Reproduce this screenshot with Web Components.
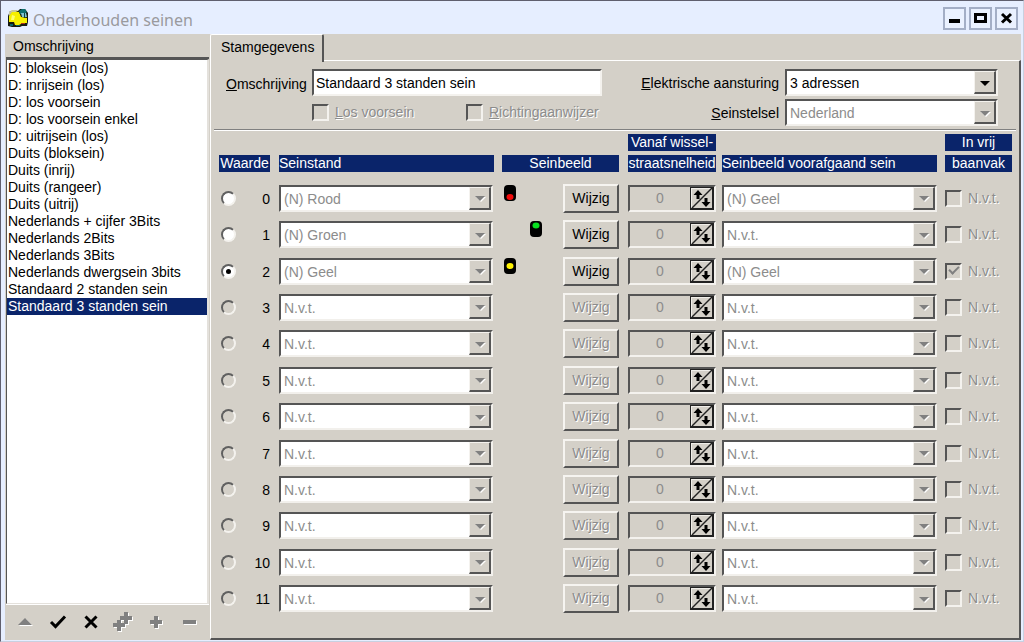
<!DOCTYPE html>
<html lang="nl">
<head>
<meta charset="utf-8">
<meta name="viewport" content="width=device-width, initial-scale=1">
<title>Onderhouden seinen</title>
<style>
  body {
    margin: 0;
    font: 14px/17px "Liberation Sans", Arial, sans-serif;
    color: #000;
    --face: #d4d0c8;
    --dark: #555555;
    --shade: #808080;
    --light: #ffffff;
    --navy: #0a246a;
    --frame: #e6eeff;
  }
</style>
</head>
<body>
<signal-window></signal-window>

<script>
const define = (name, html, setup) => {
  const template = document.createElement('template');
  template.innerHTML = html;
  customElements.define(name, class extends HTMLElement {
    connectedCallback() {
      if (this.shadowRoot) return;
      this.attachShadow({ mode: 'open' }).append(template.content.cloneNode(true));
      if (setup) setup(this, this.shadowRoot);
    }
  });
};

/* Title bar with the train icon and the three window buttons */
define('title-bar', `
  <style>
    :host { display: flex; align-items: center; height: 32px; padding: 0 3px 0 2px; background: var(--frame); }
    h1 { flex: 1; margin: 0 0 0 4px; font: 16px/22px "Noto Sans", sans-serif; color: #9a9a9e; padding-top: 4px; }
    .logo { width: 22px; height: 20px; }
    .buttons { display: flex; gap: 3px; }
    button { width: 23px; height: 23px; padding: 0; border: 2px solid #a3aec6; background: #eaf1ff; display: grid; place-items: center; }
    button svg { width: 17px; height: 17px; }
  </style>
  <svg class="logo" viewBox="0 0 22 20" aria-hidden="true">
    <path d="M1 18V8l2-5h8l2-2h5l3 4v9l-1 4h-5l-2 1H5z" fill="#161a10"/>
    <path d="M2 14V8l3-5 7 1 2 5 6 1v5h-4l-4 2H8l-1-3H4z" fill="#f6f000"/>
    <path d="M2 4l3-2h6l-2 2H5L2 8z" fill="#c9c9a0"/>
    <path d="M12 3l3-2h3l2 3-3 2h-4z" fill="#0d7070"/>
    <path d="M14 5h5l1 4h-5z" fill="#7fc4d0"/>
    <path d="M17 5h1v5h-1z" fill="#0c4448"/>
    <path d="M5 7l3 1-1 4H4z" fill="#ffff70"/>
    <path d="M3 16h3v2H3zM9 17h4v1H9z" fill="#0d6464"/>
    <path d="M14 15h4v1h-4z" fill="#b0301a"/>
  </svg>
  <h1>Onderhouden seinen</h1>
  <div class="buttons">
    <button aria-label="Minimaliseren"><svg viewBox="0 0 17 17"><path d="M3 9h11v4H3z"/></svg></button>
    <button aria-label="Maximaliseren"><svg viewBox="0 0 17 17"><path d="M2 3h13v10H2zM5 6v4h7V6z" fill-rule="evenodd"/></svg></button>
    <button aria-label="Sluiten"><svg viewBox="0 0 17 17"><path d="M4 4l9 8.500M13 4l-9 8.500" stroke="#000" stroke-width="3"/></svg></button>
  </div>`);

/* Left column: list of signals and the record toolbar */
define('signal-list', `
  <style>
    :host { display: flex; flex-direction: column; width: 203px; padding-left: 1px; }
    h2 { margin: 3px 0 0; padding: 1px 7px 2px; font: inherit; border-bottom: 2px solid var(--dark); }
    ul { flex: 1; margin: 0; padding: 0; list-style: none; background: #fff; border: 1px solid var(--dark); border-right: 2px solid #e4e1dc; border-bottom-color: #e4e1dc; }
    li { padding-left: 1px; white-space: nowrap; cursor: default; }
    li[aria-selected="true"] { background: var(--navy); color: #fff; }
    .tools { display: flex; height: 35px; padding-left: 2px; border-top: 1px solid #fff; }
    button { width: 33px; padding: 0 0 2px; border: 0; background: none; display: grid; place-items: center; }
    svg { width: 22px; height: 22px; }
    button:disabled svg { color: var(--shade); filter: drop-shadow(1px 1px 0 #fff); }
  </style>
  <h2 id="caption">Omschrijving</h2>
  <ul role="listbox" aria-labelledby="caption"></ul>
  <div class="tools" role="toolbar" aria-label="Bewerken">
    <button disabled aria-label="Bewerken"><svg viewBox="0 0 22 22"><path d="M11 7l7 7H4z" fill="currentColor"/></svg></button>
    <button aria-label="Opslaan"><svg viewBox="0 0 22 22"><path d="M4 11l4.500 4.500L18 5.500" fill="none" stroke="#000" stroke-width="3"/></svg></button>
    <button aria-label="Annuleren"><svg viewBox="0 0 22 22"><path d="M5.500 5.500l11 11M16.500 5.500l-11 11" stroke="#000" stroke-width="3"/></svg></button>
    <button disabled aria-label="Kopieren"><svg viewBox="0 0 22 22"><path d="M4 9h4v3h4v4H8v4H4v-4H0v-4h4zM11 1h4v4h4v4h-4v4h-4V9H7V5h4z" fill="currentColor"/></svg></button>
    <button disabled aria-label="Toevoegen"><svg viewBox="0 0 22 22"><path d="M8 5h4v4h4v4h-4v4H8v-4H4V9h4z" fill="currentColor"/></svg></button>
    <button disabled aria-label="Verwijderen"><svg viewBox="0 0 22 22"><path d="M4 9h13v4H4z" fill="currentColor"/></svg></button>
  </div>`, (host, root) => {
  const names = ['D: bloksein (los)', 'D: inrijsein (los)', 'D: los voorsein', 'D: los voorsein enkel',
    'D: uitrijsein (los)', 'Duits (bloksein)', 'Duits (inrij)', 'Duits (rangeer)', 'Duits (uitrij)',
    'Nederlands + cijfer 3Bits', 'Nederlands 2Bits', 'Nederlands 3Bits', 'Nederlands dwergsein 3bits',
    'Standaard 2 standen sein', 'Standaard 3 standen sein'];
  const list = root.querySelector('ul');
  names.forEach((name, i) => {
    const li = document.createElement('li');
    li.setAttribute('role', 'option');
    li.setAttribute('aria-selected', i === names.length - 1);
    li.textContent = name;
    list.append(li);
  });
  list.addEventListener('click', e => {
    if (e.target.tagName !== 'LI') return;
    for (const li of list.children) li.setAttribute('aria-selected', li === e.target);
  });
});

/* One tab page; its contents come in through the slot */
define('tab-page', `
  <style>
    :host { display: flex; flex-direction: column; flex: 1; min-width: 0; }
    [role=tablist] { display: flex; height: 26px; }
    button { position: relative; z-index: 1; height: 28px; margin: 0; padding: 0 8px 2px 10px; font: inherit; color: inherit; background: var(--face);
      border: solid; border-width: 1px 2px 0 1px; border-color: #fff var(--dark) #fff #fff; border-radius: 2px 2px 0 0; }
    [role=tabpanel] { flex: 1; display: flex; flex-direction: column; border: solid; border-width: 1px 2px 2px 1px; border-color: #fff var(--dark) var(--dark) #fff; }
  </style>
  <div role="tablist"><button role="tab" id="tab" aria-selected="true"></button></div>
  <div role="tabpanel" aria-labelledby="tab"><slot></slot></div>`,
  (host, root) => { root.querySelector('button').textContent = host.getAttribute('label'); });

/* Sunken drop-down, optionally with its caption on the left */
define('drop-down', `
  <style>
    :host { display: flex; align-items: center; justify-content: flex-end; gap: 6px; }
    label:empty { display: none; }
    label { white-space: nowrap; padding-top: 2px; }
    .box { flex: 1; min-width: 0; display: grid; grid-template-columns: 1fr 22px; height: 27px; box-sizing: border-box; background: #fff;
      border: 2px solid; border-color: var(--dark) #f2f0ec #f2f0ec var(--dark); }
    :host([caption]) .box { flex: none; width: 213px; }
    select { grid-area: 1 / 1 / 2 / 3; appearance: none; min-width: 0; margin: 0; padding: 2px 22px 0 3px; border: 0; background: none; font: inherit; color: #000; outline: 0; }
    select:disabled { color: #8c8c8c; opacity: 1; }
    .arrow { grid-area: 1 / 2; display: grid; place-items: center; pointer-events: none; background: var(--face);
      border: solid; border-width: 1px 2px 2px 1px; border-color: #f4f2ee var(--dark) var(--dark) #f4f2ee; }
    .arrow svg { width: 10px; height: 5px; margin-top: 2px; fill: #000; }
    select:disabled + .arrow svg { fill: var(--shade); filter: drop-shadow(1px 1px 0 #fff); }
  </style>
  <label for="s"></label>
  <div class="box"><select id="s"><option></option></select>
    <span class="arrow"><svg viewBox="0 0 10 5"><path d="M0 0h10L5 5z"/></svg></span></div>`,
  (host, root) => {
    const select = root.querySelector('select');
    const caption = host.getAttribute('caption');
    if (caption) root.querySelector('label').innerHTML = '<u>' + caption[0] + '</u>' + caption.slice(1);
    else select.setAttribute('aria-label', host.getAttribute('name'));
    root.querySelector('option').textContent = host.getAttribute('value');
    select.disabled = host.hasAttribute('disabled');
  });

/* Sunken tick box with a label */
define('check-box', `
  <style>
    :host { display: block; }
    label { display: flex; align-items: center; gap: 6px; white-space: nowrap; color: #8c8c8c; text-shadow: 1px 1px 0 #fff; }
    input { appearance: none; flex: none; width: 17px; height: 17px; margin: 0; box-sizing: border-box; background: var(--face);
      border: 2px solid; border-color: var(--dark) #f4f2ee #f4f2ee var(--dark); display: grid; place-items: center; }
    input:checked::before { content: ""; width: 8px; height: 4px; border: solid var(--shade); border-width: 0 0 2px 2px; transform: translateY(-2px) rotate(-45deg); }
  </style>
  <label><input type="checkbox"><span></span></label>`,
  (host, root) => {
    const input = root.querySelector('input');
    const text = host.getAttribute('label');
    root.querySelector('span').innerHTML = host.hasAttribute('key') ? '<u>' + text[0] + '</u>' + text.slice(1) : text;
    input.checked = host.hasAttribute('checked');
    input.disabled = true;
    if (host.hasAttribute('name')) input.setAttribute('aria-label', text + ' ' + host.getAttribute('name'));
  });

/* Number box with the split up/down button */
define('spin-box', `
  <style>
    :host { display: flex; height: 27px; box-sizing: border-box; background: var(--face);
      border: 2px solid; border-color: var(--dark) #f4f2ee #f4f2ee var(--dark); }
    input { flex: 1; min-width: 0; padding: 0; border: 0; background: none; text-align: center; font: inherit; color: #8c8c8c; outline: 0; }
    button { width: 24px; height: 23px; padding: 0; border: 0; background: none; display: block; }
    svg { display: block; width: 24px; height: 23px; }
  </style>
  <input type="text" inputmode="numeric" value="0" disabled>
  <button aria-label="Hoger of lager"><svg viewBox="0 0 24 23">
    <path d="M0 0h24v23H0z" fill="#222"/>
    <path d="M1 1h21v20H1z" fill="#f0eee9"/>
    <path d="M2 2h20v19H2z" fill="#d4d0c8"/>
    <path d="M2 21L22 1" stroke="#222" stroke-width="1.500"/>
    <path d="M8 3l4.500 5H9.500v4h-3V8h-3zM16 20l-4.500-5h3v-4h3v4h3z"/>
  </svg></button>`,
  (host, root) => root.querySelector('input').setAttribute('aria-label', host.getAttribute('name')));

/* Signal head with one lit lamp */
define('signal-lamp', `
  <style>
    :host { display: block; width: 12px; height: 16px; }
    svg { display: block; width: 12px; height: 16px; }
  </style>
  <svg viewBox="0 0 12 16" role="img"><rect width="12" height="16" rx="4"/><ellipse cx="6" rx="3.500" ry="3"/></svg>`,
  (host, root) => {
    const [fill, y] = { rood: ['#f00a0a', 12], groen: ['#08e020', 4.5], geel: ['#fff200', 8] }[host.getAttribute('color')];
    const lamp = root.querySelector('ellipse');
    lamp.setAttribute('fill', fill);
    lamp.setAttribute('cy', y);
    root.querySelector('svg').setAttribute('aria-label', host.getAttribute('color'));
  });

/* Top part of the page: name, options and drive settings */
define('signal-form', `
  <style>
    :host { display: flex; justify-content: space-between; margin: 0 3px; padding: 8px 18px 3px 12px; border-bottom: 1px solid var(--shade); box-shadow: 0 1px 0 #fff; }
    .left, .right { display: grid; gap: 3px; }
    .name { display: grid; grid-template-columns: auto 290px; column-gap: 5px; align-items: center; }
    .name label { padding-top: 3px; }
    .name input { height: 27px; box-sizing: border-box; padding: 0 2px; border: 2px solid; border-color: var(--dark) #f4f2ee #f4f2ee var(--dark); background: #fff; font: inherit; color: #000; outline: 0; }
    .options { grid-column: 2; display: grid; grid-template-columns: 154px auto; height: 27px; align-items: center; }
  </style>
  <div class="left name">
    <label for="naam"><u>O</u>mschrijving</label>
    <input id="naam" type="text" value="Standaard 3 standen sein">
    <div class="options">
      <check-box label="Los voorsein" key></check-box>
      <check-box label="Richtingaanwijzer" key></check-box>
    </div>
  </div>
  <div class="right">
    <drop-down caption="Elektrische aansturing" value="3 adressen"></drop-down>
    <drop-down caption="Seinstelsel" value="Nederland" disabled></drop-down>
  </div>`);

/* The twelve signal values */
define('signal-table', `
  <style>
    :host { display: flex; flex: 1; margin: 4px 7px 21px 8px; }
    table { flex: 1; width: 100%; table-layout: fixed; border-collapse: collapse; }
    .value { width: 60px; } .image { width: 126px; } .speed { width: 94px; } .free { width: 67px; }
    th { height: 38px; padding: 0 8px 8px 0; vertical-align: bottom; font-weight: normal; white-space: nowrap; }
    td { padding: 0 8px 0 0; vertical-align: middle; }
    th:nth-child(1), th:nth-child(3), td:nth-child(2), td:nth-child(3) { padding-right: 9px; }
    th:nth-child(4), td:nth-child(4) { padding-right: 6px; }
    th:last-child, td:last-child { padding-right: 0; }
    th span { display: block; background: var(--navy); color: #fff; }
    th span + span { margin-top: 4px; }
    th.start { text-align: left; }
    .pick { display: flex; align-items: center; justify-content: space-between; padding: 0 1px 0 2px; }
    .pick label { padding-top: 2px; }
    .pick input { appearance: none; width: 15px; height: 15px; margin: 0; box-sizing: border-box; border-radius: 50%;
      border: 2px solid; border-color: #606060 #f4f2ee #f4f2ee #606060; background: #fff; display: grid; place-items: center; }
    .pick input:disabled { background: none; }
    .pick input:checked::before { content: ""; width: 5px; height: 5px; border-radius: 50%; background: #000; }
    .view { display: flex; justify-content: space-between; align-items: center; }
    .view .lamps { display: flex; align-items: flex-start; height: 27px; padding-left: 2px; }
    .view .lamps.second { padding-left: 28px; }
    .view button { width: 56px; height: 29px; padding: 0; font: inherit; background: var(--face); color: #000;
      border: 2px solid; border-color: #f6f4f0 var(--dark) var(--dark) #f6f4f0; }
    .view button:disabled { color: #8c8c8c; text-shadow: 1px 1px 0 #fff; }
  </style>
  <table>
    <colgroup><col class="value"><col><col class="image"><col class="speed"><col><col class="free"></colgroup>
    <thead><tr>
      <th scope="col"><span>Waarde</span></th>
      <th scope="col" class="start"><span>Seinstand</span></th>
      <th scope="col"><span>Seinbeeld</span></th>
      <th scope="col"><span>Vanaf wissel-</span><span>straatsnelheid</span></th>
      <th scope="col" class="start"><span>Seinbeeld voorafgaand sein</span></th>
      <th scope="col"><span>In vrij</span><span>baanvak</span></th>
    </tr></thead>
    <tbody></tbody>
  </table>`, (host, root) => {
  const rows = [
    { state: '(N) Rood', lamp: 'rood', before: '(N) Geel' },
    { state: '(N) Groen', lamp: 'groen', second: true, before: 'N.v.t.' },
    { state: '(N) Geel', lamp: 'geel', before: '(N) Geel', picked: true, free: true }
  ];
  let html = '';
  for (let i = 0; i < 12; i++) {
    const r = rows[i] || { state: 'N.v.t.', before: 'N.v.t.' };
    const off = rows[i] ? '' : 'disabled';
    html += `<tr>
      <td><div class="pick"><input type="radio" name="waarde" id="w${i}" ${off} ${r.picked ? 'checked' : ''}><label for="w${i}">${i}</label></div></td>
      <td><drop-down name="Seinstand ${i}" value="${r.state}" disabled></drop-down></td>
      <td><div class="view"><div class="lamps ${r.second ? 'second' : ''}">${r.lamp ? `<signal-lamp color="${r.lamp}"></signal-lamp>` : ''}</div><button ${off}>Wijzig</button></div></td>
      <td><spin-box name="Snelheid ${i}"></spin-box></td>
      <td><drop-down name="Voorafgaand sein ${i}" value="${r.before}" disabled></drop-down></td>
      <td><check-box label="N.v.t." name="${i}" ${r.free ? 'checked' : ''}></check-box></td>
    </tr>`;
  }
  root.querySelector('tbody').innerHTML = html;
});

/* The whole window */
define('signal-window', `
  <style>
    :host { display: flex; flex-direction: column; box-sizing: border-box; min-width: 960px; min-height: 100vh;
      background: var(--frame); border: 1px solid #5f5f6e; border-right-color: #c8d0e0; border-bottom-color: #c8d0e0; padding: 1px 2px 1px 4px; }
    main { flex: 1; display: flex; gap: 1px; background: var(--face); }
  </style>
  <title-bar></title-bar>
  <main>
    <signal-list></signal-list>
    <tab-page label="Stamgegevens">
      <signal-form></signal-form>
      <signal-table></signal-table>
    </tab-page>
  </main>`);
</script>
</body>
</html>
